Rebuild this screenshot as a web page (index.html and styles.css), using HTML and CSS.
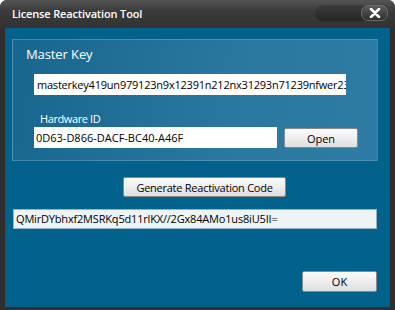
FILE: index.html
```html
<!DOCTYPE html>
<html>
<head>
<meta charset="utf-8">
<link rel="stylesheet" href="styles.css">
</head>
<body>
<div class="window">
  <div class="titlebar">
    <span class="title">License Reactivation Tool</span>
    <div class="caption">
      <div class="close">
        <svg width="12" height="10" viewBox="0 0 12 10"><path d="M2 1 L10 9 M10 1 L2 9" stroke="#fff" stroke-width="2.6" stroke-linecap="round"/></svg>
      </div>
    </div>
  </div>
  <div class="content">
    <div class="panel">
      <div class="heading">Master Key</div>
      <div class="field master">masterkey419un979123n9x12391n212nx31293n71239nfwer23</div>
      <div class="label">Hardware ID</div>
      <div class="hwrow">
        <div class="field hw">0D63-D866-DACF-BC40-A46F</div>
        <div class="btn open">Open</div>
      </div>
    </div>
    <div class="btn generate">Generate Reactivation Code</div>
    <div class="field code">QMirDYbhxf2MSRKq5d11rlKX//2Gx84AMo1us8iU5II=</div>
    <div class="btn ok">OK</div>
  </div>
</div>
</body>
</html>
```
FILE: styles.css
```css
html, body {
  margin: 0;
  padding: 0;
  background: #ffffff;
}
body {
  font-family: "Open Sans", "Noto Sans", sans-serif;
}
.window {
  width: 395px;
  height: 310px;
  background: #2f2f2f;
  border-radius: 7px 7px 0 0;
  display: flex;
  flex-direction: column;
  overflow: hidden;
}
.titlebar {
  height: 28px;
  flex: none;
  display: flex;
  align-items: flex-start;
  background: linear-gradient(#555555, #3a3a3a 40%, #333333);
}
.title {
  color: #ffffff;
  font-size: 11px;
  font-weight: 600;
  margin-left: 12px;
  margin-top: 6px;
  letter-spacing: -0.15px;
}
.caption {
  margin-left: auto;
  margin-right: 7px;
  margin-top: 5px;
  width: 73px;
  height: 16px;
  border-radius: 8px;
  background: linear-gradient(#3c3c3c, #262626);
  display: flex;
  justify-content: flex-end;
}
.close {
  width: 25px;
  height: 14px;
  border: 1px solid #6a6a6a;
  border-radius: 7px;
  background: linear-gradient(#5c5c5c, #2e2e2e);
  display: flex;
  align-items: center;
  justify-content: center;
}
.content {
  flex: 1;
  margin: 0 5px 3px 5px;
  background: #03628b;
  display: flex;
  flex-direction: column;
  align-items: flex-start;
}
.panel {
  margin: 11px 0 0 7px;
  width: 364px;
  height: 120px;
  border: 1px solid rgba(120, 175, 205, 0.45);
  background: linear-gradient(100deg, #17668e, #2a78a0 60%, #2e7ba3);
  display: flex;
  flex-direction: column;
  align-items: flex-start;
}
.heading {
  color: #ffffff;
  font-size: 13px;
  letter-spacing: -0.1px;
  margin: 4px 0 0 13px;
  height: 20px;
  line-height: 20px;
}
.field {
  background: #ffffff;
  color: #000000;
  font-size: 11px;
  height: 21px;
  line-height: 21px;
  white-space: nowrap;
  overflow: hidden;
  box-sizing: border-box;
}
.master {
  margin: 10px 0 0 21px;
  width: 312px;
  padding-left: 3px;
  letter-spacing: -0.22px;
}
.label {
  color: #ffffff;
  font-size: 11px;
  letter-spacing: -0.4px;
  margin: 15px 0 0 27px;
  height: 17px;
  line-height: 17px;
}
.hwrow {
  display: flex;
  align-items: flex-start;
  margin: 0 0 0 21px;
}
.hw {
  width: 243px;
  padding-left: 2px;
}
.btn {
  box-sizing: border-box;
  background: linear-gradient(#fbfbfb, #eeeeee 50%, #dedede);
  border: 1px solid #8a8a8a;
  border-radius: 2px;
  color: #000000;
  font-size: 11px;
  display: flex;
  align-items: center;
  justify-content: center;
}
.open {
  margin: 1px 0 0 7px;
  width: 74px;
  height: 20px;
}
.generate {
  margin: 16px 0 0 118px;
  width: 163px;
  height: 20px;
  letter-spacing: -0.25px;
}
.code {
  margin: 12px 0 0 8px;
  width: 364px;
  height: 20px;
  line-height: 18px;
  background: #eef3f6;
  border: 1px solid #8fb4c8;
  padding-left: 2px;
  letter-spacing: -0.18px;
}
.ok {
  margin: 42px 0 0 297px;
  width: 75px;
  height: 21px;
}
```
